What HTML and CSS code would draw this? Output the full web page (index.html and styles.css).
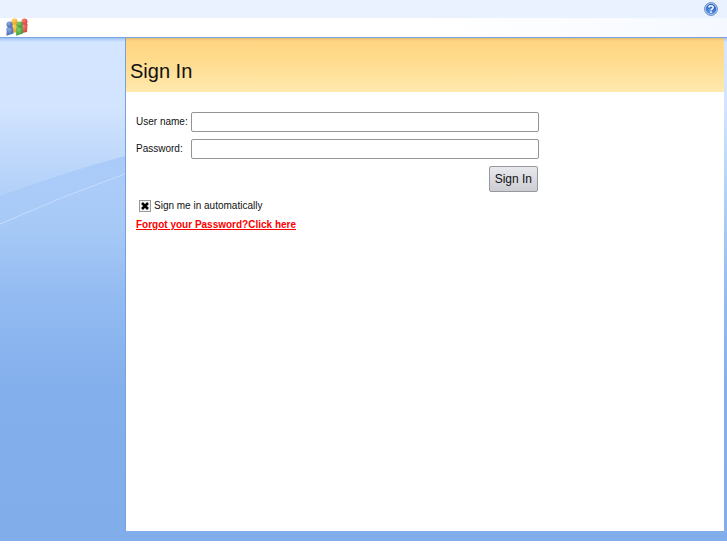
FILE: index.html
```html
<!DOCTYPE html>
<html lang="en">
<head>
    <meta charset="UTF-8">
    <meta name="viewport" content="width=device-width, initial-scale=1.0">
    <title>Sign In</title>
    <link rel="stylesheet" href="styles.css">
</head>
<body>
    <header>
        <div class="top-bar">
            <button type="button" class="help" aria-label="Help">
                <svg width="14" height="14" viewBox="0 0 14 14">
                    <defs>
                        <radialGradient id="helpFill" cx="0.4" cy="0.75" r="0.8">
                            <stop offset="0" stop-color="#5f9df0"/>
                            <stop offset="1" stop-color="#1c4fb4"/>
                        </radialGradient>
                    </defs>
                    <circle cx="7" cy="7" r="6.4" fill="#a9c6f2" stroke="#6a8cc8"/>
                    <circle cx="7" cy="7" r="5" fill="url(#helpFill)"/>
                    <path d="M4.8 5.4C5 3.2 9.3 3.1 9.2 5.5C9.1 6.9 7.1 6.8 7 8.4" fill="none" stroke="#fff" stroke-width="1.5"/>
                    <circle cx="7" cy="10.2" r="0.9" fill="#fff"/>
                </svg>
            </button>
        </div>
        <div class="logo-bar">
            <svg class="logo" width="22" height="18" viewBox="0 0 22 18">
                <defs>
                    <radialGradient id="blue" cx="0.35" cy="0.3" r="0.8"><stop offset="0" stop-color="#8fa9dc"/><stop offset="1" stop-color="#3b62b0"/></radialGradient>
                    <radialGradient id="gold" cx="0.35" cy="0.3" r="0.8"><stop offset="0" stop-color="#ffd368"/><stop offset="1" stop-color="#eb9d16"/></radialGradient>
                    <radialGradient id="green" cx="0.35" cy="0.3" r="0.8"><stop offset="0" stop-color="#86cc70"/><stop offset="1" stop-color="#36952f"/></radialGradient>
                    <radialGradient id="red" cx="0.35" cy="0.3" r="0.8"><stop offset="0" stop-color="#f28478"/><stop offset="1" stop-color="#d43a34"/></radialGradient>
                </defs>
                <path fill="url(#gold)" d="M5.5 6.5Q8.5 4.500 11.500 6.500L12 14.500H6z"/>
                <circle fill="url(#gold)" cx="8.500" cy="3.500" r="3"/>
                <path fill="url(#red)" d="M15 6.500Q18.500 4.500 21.500 6L21 14L16 15z"/>
                <circle fill="url(#red)" cx="18.500" cy="3.500" r="3"/>
                <path fill="url(#blue)" d="M0.500 10Q3.500 7.500 7 9L7.500 15.500L0.500 17.800z"/>
                <circle fill="url(#blue)" cx="3.500" cy="6.500" r="3.100"/>
                <path fill="url(#green)" d="M10 10Q13 7.500 17 9L17 15.500L10.200 17.800z"/>
                <circle fill="url(#green)" cx="13.500" cy="6.500" r="3.100"/>
            </svg>
        </div>
    </header>

    <div class="page">
        <aside class="sidebar">
            <svg class="swoosh" width="100%" height="76" viewBox="0 0 125 76" preserveAspectRatio="none">
                <defs>
                    <linearGradient id="band" x1="0" y1="0" x2="0" y2="1">
                        <stop offset="0" stop-color="#8fb9f5" stop-opacity="0.45"/>
                        <stop offset="1" stop-color="#8fb9f5" stop-opacity="0"/>
                    </linearGradient>
                </defs>
                <path d="M0 40Q62 17 125 0V76H0z" fill="url(#band)"/>
                <path d="M0 68Q62 40 125 18" fill="none" stroke="#c5dcfc"/>
            </svg>
        </aside>
        <main>
            <h1>Sign In</h1>
            <form class="login">
                <label for="username">User name:</label>
                <input type="text" id="username">
                <label for="password">Password:</label>
                <input type="password" id="password">
                <button type="submit" class="sign-in">Sign In</button>
                <label class="remember"><input type="checkbox" checked> Sign me in automatically</label>
                <a class="forgot" href="#">Forgot your Password?Click here</a>
            </form>
        </main>
    </div>
</body>
</html>
```

FILE: styles.css
```css
* {
    margin: 0;
    padding: 0;
    box-sizing: border-box;
}

body {
    display: flex;
    flex-direction: column;
    min-height: 100vh;
    padding-bottom: 4px;
    background: #fff;
    color: #111;
    font-family: "Liberation Sans", Arial, sans-serif;
    font-size: 10px;
}

.top-bar {
    display: flex;
    justify-content: flex-end;
    height: 18px;
    padding: 2px 9px;
    background: #ebf2ff;
}

.help {
    width: 14px;
    height: 14px;
    border: none;
    background: none;
    cursor: pointer;
}

.help svg,
.logo {
    display: block;
}

.logo-bar {
    height: 19px;
    padding-left: 6px;
    background: linear-gradient(to right, #fff 60%, #f5f9ff);
}

.page {
    flex: 1;
    display: flex;
    padding: 0 3px 10px 0;
    border-top: 1px solid #7ba4dc;
    background: linear-gradient(#9fc3f5, #d4e5ff 4px, #d2e4ff 70px, #bdd7fb 125px, #a6c9f6 190px, #93bbf2 260px, #83afec 350px, #81adeb);
}

.sidebar {
    width: 126px;
    padding-top: 118px;
    border-right: 1px solid #76a2e0;
}

.swoosh {
    display: block;
}

main {
    flex: 1;
    background: #fff;
}

h1 {
    height: 54px;
    padding: 20px 4px 0;
    background: linear-gradient(#e2bd76, #ffd583 3px, #ffdb8c 22px, #ffe9ae);
    font-size: 20px;
    font-weight: normal;
    line-height: 26px;
}

.login {
    display: grid;
    grid-template-columns: 51px minmax(100px, 348px);
    column-gap: 4px;
    row-gap: 7px;
    align-items: center;
    padding: 20px 10px;
}

.login input[type="text"],
.login input[type="password"] {
    width: 100%;
    height: 20px;
    padding: 0 4px;
    border: 1px solid #929497;
    border-radius: 2px;
    background: #fff;
    font-family: inherit;
    font-size: 12px;
}

label {
    padding-bottom: 2px;
    white-space: nowrap;
}

.sign-in {
    grid-column: 2;
    justify-self: end;
    height: 26px;
    margin-right: 1px;
    padding: 0 5px;
    border: 1px solid #96989c;
    border-radius: 2px;
    background: linear-gradient(#e8e9ed, #cccdd3);
    color: #111;
    font-family: inherit;
    font-size: 12px;
}

.remember {
    grid-column: 1 / -1;
    display: flex;
    align-items: center;
    gap: 3px;
    height: 13px;
    padding: 0 0 0 3px;
}

.remember input {
    appearance: none;
    width: 12px;
    height: 12px;
    border: 1px solid #999;
    background: #f4f4f4;
}

.remember input:checked {
    background: #f4f4f4 url("data:image/svg+xml,%3Csvg xmlns='http://www.w3.org/2000/svg' viewBox='0 0 10 10'%3E%3Cpath d='M2 2l6 6M8 2l-6 6' stroke='%23000' stroke-width='2.6'/%3E%3C/svg%3E");
}

.forgot {
    grid-column: 1 / -1;
    justify-self: start;
    color: #f00;
    font-weight: bold;
    line-height: 12px;
}
```
